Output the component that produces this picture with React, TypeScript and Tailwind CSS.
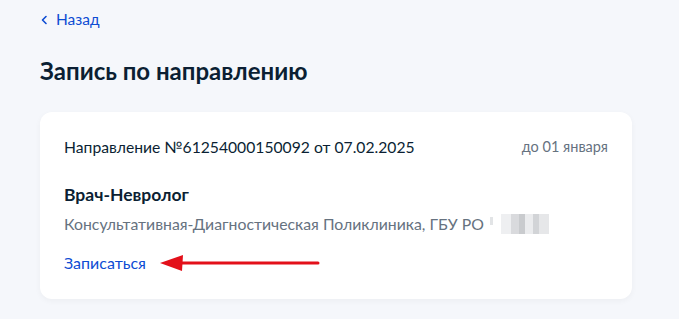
import React from "react";

export default function App() {
  return (
    <div className="w-[679px] h-[319px] bg-[#f5f7fb] overflow-hidden" style={{ fontFamily: "Lato, 'Noto Sans', sans-serif" }}>
      <div className="px-[40px] pt-[9px]">
        <div className="flex items-center gap-[7px] text-[#0d4cd3] text-[15.5px] leading-[20px]">
          <svg width="9" height="10" viewBox="0 0 9 10" className="mt-[1px]">
            <path d="M6 1.5L2.5 5L6 8.5" fill="none" stroke="#0d4cd3" strokeWidth="1.6" strokeLinecap="round" strokeLinejoin="round" />
          </svg>
          <span>Назад</span>
        </div>
        <h1 className="mt-[27px] text-[24px] leading-[30px] font-bold text-[#0b1f33]">Запись по направлению</h1>
        <div className="mt-[26px] w-[592px] h-[187px] bg-white rounded-[12px] shadow-[0_2px_6px_rgba(0,0,0,0.04)] px-[24px] pt-[25px]">
          <div className="flex items-center justify-between">
            <span className="text-[15.7px] leading-[20px] text-[#0b1f33]">Направление №61254000150092 от 07.02.2025</span>
            <span className="text-[14.5px] leading-[20px] text-[#66727f]">до 01 января</span>
          </div>
          <div className="mt-[27px] text-[17.5px] leading-[22px] font-bold text-[#0b1f33]">Врач-Невролог</div>
          <div className="mt-[8px] flex items-center text-[15.8px] leading-[20px] text-[#66727f]">
            <span>Консультативная-Диагностическая Поликлиника, ГБУ РО</span>
            <span className="ml-[6px] flex h-[20px]">
              <span className="w-[3px] h-[8px] mt-[3px] bg-[#e2e4e6]" />
              <span className="w-[8px] bg-white" />
              <span className="w-[10px] bg-[#eeeff1]" />
              <span className="w-[8px] bg-[#d9dadd]" />
              <span className="w-[6px] bg-[#c9cbce]" />
              <span className="w-[8px] bg-[#ebecee]" />
              <span className="w-[6px] bg-[#d2d4d7]" />
              <span className="w-[10px] bg-[#e6e7e9]" />
            </span>
          </div>
          <div className="mt-[19px] flex items-center">
            <span className="text-[16px] leading-[20px] text-[#0d4cd3]">Записаться</span>
            <svg width="162" height="18" viewBox="0 0 162 18" className="ml-[13px]">
              <path d="M23 9 L159 9" stroke="#e3101a" strokeWidth="3" strokeLinecap="round" />
              <path d="M1 9 L24 1 L23 17 Z" fill="#e3101a" />
            </svg>
          </div>
        </div>
      </div>
    </div>
  );
}
